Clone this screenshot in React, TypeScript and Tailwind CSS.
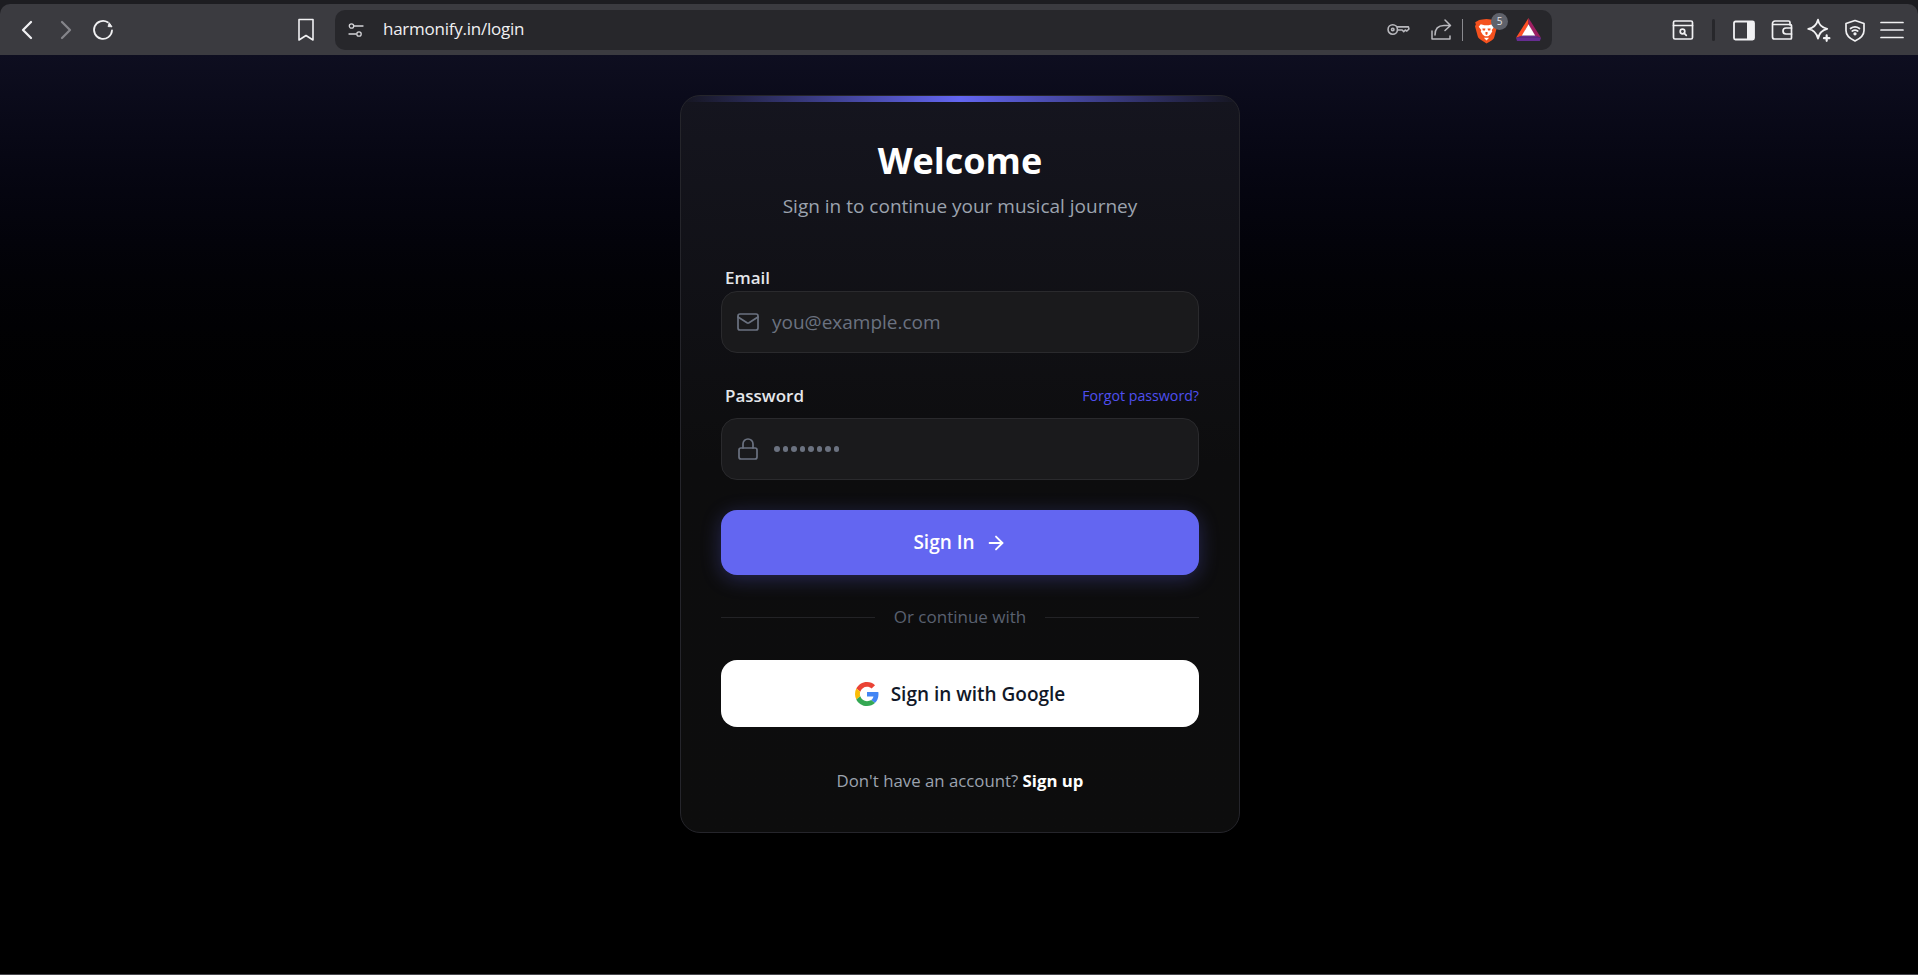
import { ArrowRight, ChevronLeft, ChevronRight, Lock, Mail } from "lucide-react";

const font = { fontFamily: '"Open Sans", "Noto Sans", sans-serif' };

function Stroke({ w = 24, h = 24, vb = "0 0 24 24", sw = 1.6, className = "", children }: any) {
  return (
    <svg width={w} height={h} viewBox={vb} fill="none" stroke="currentColor" strokeWidth={sw} strokeLinecap="round" strokeLinejoin="round" className={className}>
      {children}
    </svg>
  );
}

function BraveIcon() {
  return (
    <div className="relative h-[26px] w-[24px]">
      <svg width="23" height="26" viewBox="0 0 22 24" className="absolute left-0 top-[1px]">
        <path d="M4 1.500 7 1 11 .5 15 1l3 .5 2.800 3.200-.6 2 .8 1.800-2.600 9.500c-.5 1.700-1.500 2.500-2.900 3.400L11 24l-5.500-3.600c-1.400-.9-2.400-1.700-2.900-3.400L0 7.500l.8-1.800-.6-2Z" fill="#f4511e" />
        <path d="M5.500 5.500 9 6.500h4l3.500-1 2 2.500-2.500 3 .5 1.500-2 3-2 1.500h-3l-2-1.500-2-3 .5-1.500-2.500-3Z" fill="#fff" />
        <path d="M7 9.500h3l-.5 2H7.500ZM12 9.500h3l-.5 2h-2ZM10 13h2v2l-1 .8-1-.8Z" fill="#f4511e" />
        <path d="M8.500 18.500h5L11 21Z" fill="#fff" />
      </svg>
      <div className="absolute left-[16px] top-[-4px] flex h-[17px] w-[17px] items-center justify-center rounded-full bg-[#5f626b] text-[10px] leading-none text-[#e5e7eb]">5</div>
    </div>
  );
}

function BatIcon() {
  return (
    <svg width="25" height="23" viewBox="0 0 24 22">
      <path d="M12 0 0 19l6-2L12 6Z" fill="#ff4e24" />
      <path d="M12 0 24 19l-6-2L12 6Z" fill="#9e1f63" />
      <path d="M12 6 5.500 17h13Z" fill="#fff" />
      <path d="M0 19h24l-1 3H1Z" fill="#662d91" />
      <path d="M0 19 5.500 17h13L24 19Z" fill="#662d91" />
    </svg>
  );
}

function GoogleIcon() {
  return (
    <svg width="24" height="24" viewBox="0 0 48 48">
      <path fill="#EA4335" d="M24 9.500c3.540 0 6.710 1.220 9.210 3.600l6.850-6.850C35.900 2.380 30.470 0 24 0 14.620 0 6.510 5.380 2.560 13.220l7.980 6.190C12.430 13.720 17.740 9.500 24 9.500z" />
      <path fill="#4285F4" d="M46.980 24.550c0-1.570-.15-3.090-.38-4.550H24v9.020h12.940c-.58 2.960-2.260 5.480-4.780 7.180l7.730 6c4.510-4.180 7.090-10.360 7.090-17.650z" />
      <path fill="#FBBC05" d="M10.530 28.590c-.48-1.450-.76-2.990-.76-4.590s.27-3.140.76-4.590l-7.980-6.190C.92 16.460 0 20.120 0 24c0 3.880.92 7.540 2.560 10.780l7.970-6.190z" />
      <path fill="#34A853" d="M24 48c6.480 0 11.930-2.130 15.890-5.810l-7.730-6c-2.150 1.450-4.920 2.300-8.160 2.300-6.260 0-11.570-4.220-13.470-9.910l-7.980 6.190C6.510 42.620 14.620 48 24 48z" />
    </svg>
  );
}

function BrowserBar() {
  return (
    <div className="h-[55px] shrink-0 bg-[#1d1d21] pt-[4px]">
      <div className="flex h-[51px] items-center rounded-t-[10px] bg-[#3b3b40] text-[#f1f1f3]">
        <ChevronLeft size={32} strokeWidth={1.7} className="ml-[11px] text-[#f1f1f3]" />
        <ChevronRight size={32} strokeWidth={1.7} className="ml-[7px] text-[#85858a]" />
        <Stroke w={24} h={24} sw={1.8} className="ml-[9px]">
          <path d="M16.800 4.300A9 9 0 1 0 21 12.500" />
          <path d="M17.500 8.600 21 8.800 18.400 5Z" fill="currentColor" strokeWidth="1" />
        </Stroke>
        <Stroke w={22} h={26} vb="0 0 22 26" className="ml-[180px]">
          <path d="M4 2.500h14v20.500l-7-4.500-7 4.500Z" />
        </Stroke>
        <div className="ml-[18px] flex h-[40px] w-[1217px] items-center rounded-[10px] bg-[#27272b] text-[#d4d4d8]">
          <Stroke w={18} h={18} vb="0 0 18 18" sw={1.3} className="ml-[12px] text-[#d4d4d8]">
            <circle cx="4.500" cy="5" r="2.200" />
            <path d="M7 5h9M2 13h7" />
            <circle cx="12" cy="13" r="2.200" />
          </Stroke>
          <span className="ml-[18px] pb-[2px] text-[17px] leading-none tracking-[-0.25px] text-[#f0f0f2]" style={font}>harmonify.in/login</span>
          <div className="ml-auto flex items-center">
            <Stroke w={23} h={15} vb="0 0 22 14" sw={1.500} className="text-[#b9b9be]">
              <circle cx="5.500" cy="7" r="4.500" />
              <circle cx="5.500" cy="7" r="1.200" />
              <path d="M10 4.500h10.500l.5 2-2 2-1.500-1-1.500 1.500-1.500-1.500h-4" />
            </Stroke>
            <Stroke w={24} h={24} sw={1.500} className="ml-[19px] text-[#b9b9be]">
              <path d="M3 13v8h18v-3M6 17c0-6 3-9.500 9-9.500h6M16 2l5.500 5.500L16 12.500" />
            </Stroke>
            <div className="ml-[9px] h-[22px] w-px bg-[#8a8a8f]" />
            <div className="ml-[12px] mr-[11px] flex items-center gap-[17px]">
              <BraveIcon />
              <BatIcon />
            </div>
          </div>
        </div>
        <div className="ml-auto mr-[13px] flex items-center text-[#f1f1f3]">
          <Stroke w={24} h={24} sw={1.700}>
            <rect x="2.500" y="3" width="19" height="18" rx="1.500" />
            <path d="M2.500 7.500h19" />
            <circle cx="11.500" cy="13.500" r="2.300" />
            <path d="m13.300 15.300 2 2" />
          </Stroke>
          <div className="ml-[17px] h-[22px] w-[3px] rounded bg-[#27272b]" />
          <svg width="24" height="24" viewBox="0 0 24 24" className="ml-[17px]">
            <rect x="2" y="3.500" width="20" height="18" rx="1.500" fill="none" stroke="currentColor" strokeWidth="1.800" />
            <rect x="15" y="3.500" width="7" height="18" fill="currentColor" />
          </svg>
          <Stroke w={24} h={24} sw={1.700} className="ml-[14px]">
            <path d="M20 7V4.500a1.500 1.500 0 0 0-1.500-1.500H5a2.500 2.500 0 0 0-2.500 2.500V19a2 2 0 0 0 2 2h16a1 1 0 0 0 1-1V7.500a1 1 0 0 0-1-1H3" />
            <path d="M21.500 10H16a2.500 2.500 0 0 0 0 6h5.500" />
          </Stroke>
          <Stroke w={26} h={26} sw={1.700} className="ml-[11px]">
            <path d="M12 2.500c.8 5 3.500 7.500 8.500 8.500-4.500 1-7.300 3.500-8.500 9-1.200-5.500-4-8-9-9 5-1 7.700-3.500 9-8.500Z" />
            <path d="M20 17v5M17.500 19.500h5" strokeWidth="2" />
          </Stroke>
          <Stroke w={24} h={26} sw={1.700} className="ml-[12px]">
            <path d="M12 2.500 21 5.500v7c0 5-3.500 8-9 10.500-5.500-2.500-9-5.500-9-10.500v-7Z" />
            <path d="M7.500 10.500c2.700-2 6.300-2 9 0M9.300 13c1.700-1 3.700-1 5.400 0" />
            <circle cx="12" cy="15.800" r=".8" fill="currentColor" />
          </Stroke>
          <Stroke w={26} h={24} vb="0 0 26 24" sw={1.700} className="ml-[12px]">
            <path d="M2 4.500h22M2 12h22M2 19.500h22" />
          </Stroke>
        </div>
      </div>
    </div>
  );
}

export default function App() {
  return (
    <div className="flex h-[975px] flex-col overflow-hidden bg-black" style={font}>
      <BrowserBar />
      <main className="flex flex-1 justify-center bg-gradient-to-b from-[#0e0e20] via-black via-50% to-black pl-[2px] pt-[40px]">
        <div className="relative h-[738px] w-[560px] overflow-hidden rounded-[20px] border border-[#25252b] bg-gradient-to-b from-[#15151f] via-[#0d0d0e] via-50% to-[#0d0d0d] px-[40px]">
          <div className="absolute inset-x-0 top-0 h-[6px] bg-gradient-to-r from-transparent via-[#6366f1] to-transparent" />
          <h1 className="mt-[42px] text-center text-[36px] font-bold leading-[46px] text-white">Welcome</h1>
          <p className="mt-[8px] text-center text-[19px] leading-[28px] text-[#9ca3af]">Sign in to continue your musical journey</p>

          <label className="mt-[46px] block pl-[4px] text-[17px] font-semibold leading-[24px] text-[#e5e7eb]">Email</label>
          <div className="mt-[1px] flex h-[62px] items-center rounded-[16px] border border-[#2a2a2d] bg-[#1a1a1c]">
            <Mail size={24} strokeWidth={1.7} className="ml-[14px] text-[#6b7280]" />
            <span className="ml-[12px] pt-[1px] text-[19px] text-[#6b7280]">you@example.com</span>
          </div>

          <div className="mt-[31px] flex items-center justify-between pl-[4px]">
            <label className="text-[17px] font-semibold leading-[24px] text-[#e5e7eb]">Password</label>
            <a className="text-[14.200px] leading-[24px] text-[#4f4ff0]">Forgot password?</a>
          </div>
          <div className="mt-[10px] flex h-[62px] items-center rounded-[16px] border border-[#2a2a2d] bg-[#1a1a1c]">
            <Lock size={24} strokeWidth={1.7} className="ml-[14px] text-[#6b7280]" />
            <span className="ml-[14px] flex gap-[3px]">
              {Array.from({ length: 8 }).map((_, i) => (
                <span key={i} className="h-[5.500px] w-[5.500px] rounded-full bg-[#6b7280]" />
              ))}
            </span>
          </div>

          <button className="mt-[30px] flex h-[65px] w-full items-center justify-center rounded-[16px] bg-[#6366f1] text-[19px] font-semibold text-white shadow-[0_4px_20px_rgba(99,102,241,0.3)]">
            Sign In
            <ArrowRight size={22} strokeWidth={2} className="ml-[10px]" />
          </button>

          <div className="mt-[30px] flex items-center">
            <div className="h-px flex-1 bg-[#232326]" />
            <span className="mx-[19px] text-[17px] leading-[24px] text-[#5a6170]">Or continue with</span>
            <div className="h-px flex-1 bg-[#232326]" />
          </div>

          <button className="mt-[31px] flex h-[67px] w-full items-center justify-center gap-[12px] rounded-[16px] bg-white text-[19px] font-semibold text-[#111827]">
            <GoogleIcon />
            <span className="pt-[2px]">Sign in with Google</span>
          </button>

          <p className="mt-[41px] text-center text-[16.800px] leading-[26px] text-[#9ca3af]">
            Don't have an account? <a className="font-bold text-white">Sign up</a>
          </p>
        </div>
      </main>
      <div className="h-px shrink-0 bg-[#45454a]" />
    </div>
  );
}
